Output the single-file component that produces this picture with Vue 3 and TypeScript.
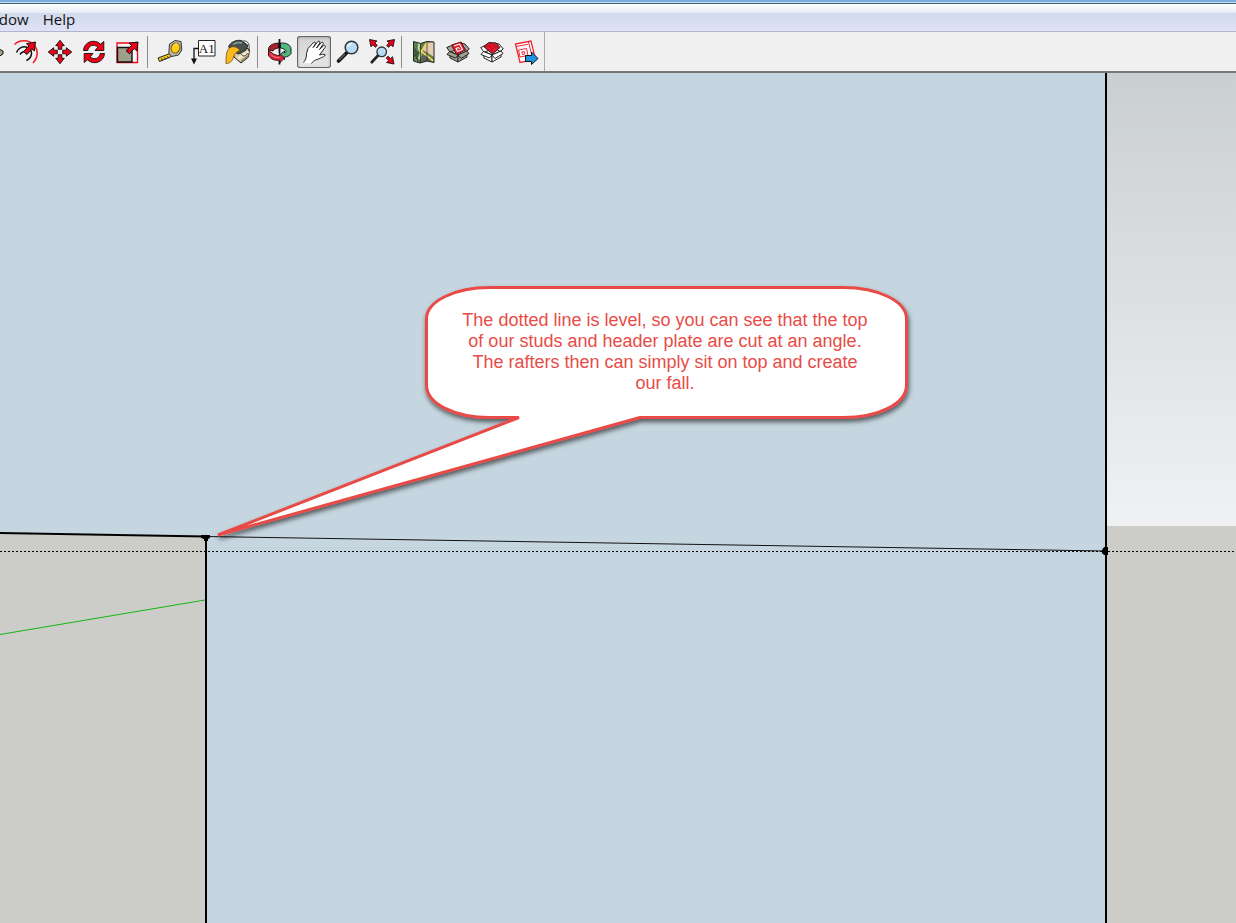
<script setup lang="ts">
import { ref } from 'vue'

type Tool = { id: string; label: string }

const groups: Tool[][] = [
  [
    { id: 'pushpull', label: 'Push/Pull' },
    { id: 'offset', label: 'Offset' },
    { id: 'move', label: 'Move' },
    { id: 'rotate', label: 'Rotate' },
    { id: 'scale', label: 'Scale' },
  ],
  [
    { id: 'tape', label: 'Tape Measure' },
    { id: 'text', label: 'Text label' },
    { id: 'paint', label: 'Paint Bucket' },
  ],
  [
    { id: 'orbit', label: 'Orbit' },
    { id: 'pan', label: 'Pan' },
    { id: 'zoom', label: 'Zoom' },
    { id: 'extents', label: 'Zoom Extents' },
  ],
  [
    { id: 'map', label: 'Add Location' },
    { id: 'getmodels', label: 'Get Models' },
    { id: 'extensions', label: 'Extension Warehouse' },
    { id: 'layout', label: 'Send to Layout' },
  ],
]

const active = ref('pan')
</script>

<template>
  <div class="app">
    <div class="frame"></div>
    <nav class="menu" aria-label="Main menu">
      <button type="button">Window</button>
      <button type="button">Help</button>
    </nav>

    <header class="toolbar">
      <div class="tools">
        <div v-for="(group, g) in groups" :key="g" class="group">
          <button
            v-for="tool in group"
            :key="tool.id"
            type="button"
            class="tool"
            :class="{ active: active === tool.id }"
            :aria-label="tool.label"
            :aria-pressed="active === tool.id"
            @click="active = tool.id"
          >
            <svg viewBox="0 0 34 32" aria-hidden="true">
              <g v-if="tool.id === 'pushpull'">
                <path d="M18 14l6-1 4 2v3l-5 3-5-2z" fill="#a6a68c" stroke="#111" />
              </g>
              <g v-else-if="tool.id === 'offset'" fill="none">
                <path d="M5.500 8.500C10 4 19 3 24.500 8.500C29.500 14 29.500 21 24 27" stroke="#ee1c2e" stroke-width="1.600" />
                <path d="M7.500 16.500C9 12 14 9.500 18.500 11.500C24 14 24 21 17.500 24.500" stroke="#111" stroke-width="1.500" />
                <path d="M11 18.500c1.500-2.500 4-3.500 6-2" stroke="#111" stroke-width="1.500" />
                <path d="M26.500 6L25.300 15L22.800 12.800L18 18.500L14.500 15.500L20 10L17.500 7.800z" fill="#f00014" stroke="#111" />
              </g>
              <g v-else-if="tool.id === 'move'" fill="#f00014" stroke="#111" stroke-width=".9">
                <path v-for="a in [0, 90, 180, 270]" :key="a" :transform="`rotate(${a} 17 16)`" d="M17 4.200L21.300 9.700H18.800V13.300H15.200V9.700H12.700z" />
              </g>
              <g v-else-if="tool.id === 'rotate'" fill="#f00014" stroke="#111" stroke-width=".9" stroke-linejoin="round">
                <path d="M6.500 14.500C7 5.500 18 2.500 23.500 8.200L26.800 5.500V14.500H18L20.800 11.200C17 7.500 11.500 9.500 10.800 14.500z" />
                <path d="M27.500 17.500C27 26.500 16 29.500 10.500 23.800L7.200 26.500V17.500H16L13.200 20.800C17 24.500 22.500 22.500 23.200 17.500z" />
              </g>
              <g v-else-if="tool.id === 'scale'">
                <path d="M6 7h20.500v19.500H6z" fill="#f8f8f8" stroke="#f00014" stroke-width="1.300" />
                <path d="M6.500 11.500h14.500v14.500H6.500z" fill="#a0a08a" stroke="#111" stroke-width="1.400" />
                <path d="M27 6L25.800 15L23.200 12.600L18.500 17.800L15 14.800L20.500 9.500L18 7.200z" fill="#f00014" stroke="#111" />
              </g>
              <g v-else-if="tool.id === 'tape'">
                <path d="M5 22l12-4.500 2.500 2.500L6.500 25.500z" fill="#f7c81c" stroke="#222" />
                <path d="M8.500 22.500l1 2M11.500 21.500l1 2M14.500 20.300l1 2" stroke="#222" />
                <path d="M16.500 8L22 4.500L28 5.500L28.800 14L25.500 19L18.500 20.500L15.800 17z" fill="#b9b9b0" stroke="#333" stroke-linejoin="round" />
                <ellipse cx="22.500" cy="12" rx="4.300" ry="5.200" fill="#ffcd14" stroke="#7a5e18" transform="rotate(20 22.500 12)" />
                <path d="M20.500 9.500c1-2 3-2 4-1" fill="none" stroke="#fff0a0" />
              </g>
              <g v-else-if="tool.id === 'text'">
                <path d="M11.500 4.500h16.500v15.500h-16.500z" fill="#fff" stroke="#222" />
                <path d="M11.500 12.500H7v12" fill="none" stroke="#111" stroke-width="1.300" />
                <path d="M4 22.500h6L7 28.500z" fill="#111" />
                <text x="19.800" y="16.500" class="label-glyph">A1</text>
              </g>
              <g v-else-if="tool.id === 'paint'" stroke-linejoin="round">
                <path d="M11 14L20 9L28.500 13.500L27.500 21L20 27L13 21z" fill="#d8cba5" stroke="#222" />
                <path d="M17 22.500L27.500 15.500" stroke="#f4ecd6" stroke-width="2.500" />
                <path d="M20 25.500L27.500 19.500" stroke="#8b8064" stroke-width="1.500" />
                <path d="M7.500 11C9 6.500 15 3.500 20.500 4.500L27 9.500L24.500 14.500L17 18z" fill="#46524f" stroke="#222" />
                <path d="M12 8.500C15 6.500 18 6 21 7" fill="none" stroke="#92a09b" stroke-width="1.500" />
                <path d="M22 5C27 4 29.500 9 27.500 15M19.500 17c2 4 5 4 7 0" fill="none" stroke="#444" />
                <path d="M5 27.500C5 21 5 15 8.500 12C12 9.500 17 11 19 14.500C15.500 15.500 13.500 18 12.500 21C11.500 25 9 27.500 5 27.500z" fill="#fcb91b" stroke="#6b4e10" stroke-width=".8" />
              </g>
              <g v-else-if="tool.id === 'orbit'" stroke-linejoin="round">
                <path d="M17.500 7C24 6.500 28 9.500 28 13V17.500C26.500 20 24 21 21.500 21V23.500L16.500 19L21.500 15V17C25 15.500 22 12.500 17.500 12z" fill="#55b878" stroke="#123" />
                <path d="M15.500 7C9 7.500 5.500 10 5.500 13.500L10 15C10.500 13.500 12 12.500 15.500 12z" fill="#a8222f" stroke="#311" />
                <path d="M5.500 13.500V19.500C8 23.500 12 24.700 16.500 24.200V27L21.500 22L16.500 17.500V19.500C12 19.500 8.500 17.500 5.500 13.500z" fill="#e02436" stroke="#311" />
                <path d="M7.500 18c2.500 3 6 3.700 9 3.500" fill="none" stroke="#f48a92" />
                <path d="M16.500 3v14.500M16.500 25v3.500" stroke="#111" stroke-width="1.800" />
              </g>
              <g v-else-if="tool.id === 'pan'">
                <path d="M6.500 26.500C9 23.500 9.500 21 9.500 17.500L11 12.500L16.500 6.500C17.500 5.500 19 6.500 18.300 8L16 11.500L21 5.500C22.200 4.500 23.500 5.700 22.800 7L19.500 12L24.500 6.500C25.700 5.700 27 7 26 8.300L22.500 13.500L26.800 9.500C28 9 29 10.200 28 11.500L22.500 19C25 18.500 26.500 18 28 18.500C28.500 20 26 21 23.500 22C20 24 17 23.500 14.500 27.500" fill="#fff" stroke="#222" stroke-linejoin="round" />
              </g>
              <g v-else-if="tool.id === 'zoom'">
                <path d="M15.500 17L7.500 25" stroke="#111" stroke-width="3.600" stroke-linecap="round" />
                <path d="M14 18L8 24" stroke="#666" stroke-width="1.200" />
                <circle cx="20.500" cy="11.500" r="6.300" fill="#b7dcf8" stroke="#333" stroke-width="1.500" />
                <path d="M17 11c.3-2 1.800-3.300 4-3.300" stroke="#edf8ff" stroke-width="1.500" fill="none" />
              </g>
              <g v-else-if="tool.id === 'extents'">
                <path d="M13.500 19L6 27" stroke="#222" stroke-width="2.600" />
                <circle cx="16.700" cy="15.800" r="4.800" fill="#b7dcf8" stroke="#333" stroke-width="1.300" />
                <g fill="#f00014" stroke="#111" stroke-width=".9">
                  <path d="M4.500 3.500L12 5L9.800 6.800L12.300 9.500L10.300 11.300L8 8.800L6 10.800z" />
                  <path d="M29.500 3.500L22 5L24.200 6.800L21.700 9.500L23.700 11.300L26 8.800L28 10.800z" />
                  <path d="M29 28L21.500 26.500L23.700 24.700L21.200 22L23.200 20.200L25.500 22.700L27.500 20.700z" />
                </g>
              </g>
              <g v-else-if="tool.id === 'map'">
                <path d="M6.500 5.500L13.500 7.500L20 5.500L27 6V26.500L20 25L13 27L6.500 25z" fill="#5d7d49" />
                <path d="M19 7L27 6V21L16 14z" fill="#e3ceb0" />
                <path d="M11 6C14 9 10 11 12.500 14S14 20 9 26" fill="none" stroke="#c1d7a4" stroke-width="2" />
                <path d="M8 13L11 26M7 20l5-4" stroke="#3c5233" stroke-width="2" />
                <path d="M20 6L14.500 15.500L26.500 25" fill="none" stroke="#f2d456" stroke-width="1.800" />
                <path d="M14.500 20l3-1 6 5-4 1-5 1z" fill="#56625b" />
                <path d="M6.500 5.500L13.500 7.500L20 5.500L27 6V26.500L20 25L13 27L6.500 25z" fill="none" stroke="#222" />
                <path d="M13.500 7.500V27M20 5.500V25" stroke="#222" stroke-width=".7" />
              </g>
              <g v-else-if="tool.id === 'getmodels' || tool.id === 'extensions'" stroke-linejoin="round">
                <g :fill="tool.id === 'getmodels' ? '#a3a394' : '#fff'" stroke="#222">
                  <path d="M8.500 15L17 19V26L9 22z" />
                  <path d="M17 19L26 15V21L17 26z" />
                  <path d="M12 9L5.700 11.500L9 16L15 14z" />
                  <path d="M20 7L24 8L28.300 13L25 15.500L20 12z" />
                  <path d="M8.500 15.500L17 19L14.500 22L6 18.500z" />
                  <path d="M17 19L26 15L28 17.500L20 22.500z" />
                </g>
                <g v-if="tool.id === 'getmodels'">
                  <path d="M10.500 9L20 6L24.500 14L15.500 18.500z" fill="#e01c2b" stroke="#611" />
                  <path d="M13 10l5.500-2 3 5.500-5 2-1.500-3 2.500-1 1 1.500" fill="none" stroke="#fff" stroke-width="1.100" />
                </g>
                <g v-else>
                  <path d="M8.500 10.500L14 6.500L21 7L25 11.500L17.500 18z" fill="#e5172a" stroke="#222" />
                  <path d="M9 10.500L14 10L17 12.500L21 10.500L25 11.500M14 10L17 7.500L21 10.500M17 12.500V17" fill="none" stroke="#9c1020" stroke-width=".7" />
                </g>
              </g>
              <g v-else>
                <path d="M6.500 8L22 5L26.500 23.500L11 26.500z" fill="#fff" stroke="#ee2636" stroke-width="1.300" />
                <path d="M7.500 10.500L19 8.300M19.500 6l4 16M9.500 14l8-1.500 1.500 7-8 1.500zM12.800 16l2.400-.5.7 2.500-2.400.5z" fill="none" stroke="#ee2636" />
                <path d="M16.500 19.500H22.500V16L29 22.500L22.500 28.500V25.500H16.500z" fill="#1d93e4" stroke="#111" />
              </g>
            </svg>
          </button>
        </div>
      </div>
    </header>

    <main class="viewport">
      <svg class="scene" viewBox="0 73 1236 850" preserveAspectRatio="xMinYMin slice" role="img" aria-label="Wall framing model">
        <defs>
          <linearGradient id="sky" x1="0" y1="0" x2="0" y2="1">
            <stop offset="0" stop-color="#cacfd2" />
            <stop offset="1" stop-color="#f0f1f3" />
          </linearGradient>
          <filter id="shadow" x="-5%" y="-5%" width="110%" height="115%">
            <feDropShadow dx="1" dy="3" stdDeviation="2.500" flood-color="#000" flood-opacity=".6" />
          </filter>
        </defs>
        <rect y="73" width="1236" height="850" fill="#c6d6e0" />
        <rect x="1106" y="73" width="130" height="453" fill="url(#sky)" />
        <rect x="1106" y="526" width="130" height="397" fill="#cccdc8" />
        <path d="M0 533L206 537V923H0z" fill="#cccdc8" />
        <path d="M0 634.500L205 600" stroke="#16b416" />
        <path d="M0 551.500H1236" stroke="#000" stroke-dasharray="2 2" />
        <path d="M206 536.500L1106 551" stroke="#111" />
        <path d="M0 533L206 536.500" stroke="#000" stroke-width="2" />
        <path d="M206 537V923M1106 73V923" stroke="#000" stroke-width="2" />
        <path d="M201 535h9v3l-2 1v2h-4v-2l-3-1zM1102 550l2-3h4v8h-4l-2-2z" fill="#000" />
        <path
          d="M490 287.500H843C878 287.500 906.500 301 906.500 319V385C906.500 404 878 417.500 843 417.500H640L218 535L519 417.500H490C455 417.500 426.500 404 426.500 385V319C426.500 301 455 287.500 490 287.500z"
          fill="#fff" stroke="#e84c47" stroke-width="3" stroke-linejoin="bevel" filter="url(#shadow)"
        />
      </svg>
      <p class="note">
        The dotted line is level, so you can see that the top<br />
        of our studs and header plate are cut at an angle.<br />
        The rafters then can simply sit on top and create<br />
        our fall.
      </p>
    </main>
  </div>
</template>

<style>
body {
  margin: 0;
}
</style>

<style scoped>
.app {
  display: flex;
  flex-direction: column;
  height: 100vh;
  overflow: hidden;
  background: #f0f0f0;
}
.frame {
  flex: none;
  height: 2px;
  background: #7aaddb;
  border-bottom: 1px solid #c3def5;
}
.menu {
  flex: none;
  display: flex;
  justify-content: flex-start;
  gap: 14px;
  box-sizing: border-box;
  height: 29px;
  padding-top: 2px;
  border-top: 1px solid #46607a;
  border-bottom: 1px solid #b0b6cf;
  background: linear-gradient(#fff 0, #e6ebf4 9px, #d2d9eb 9px, #dee4f6 100%);
  overflow: hidden;
}
.menu button {
  padding: 0;
  border: 0;
  background: none;
  color: #111;
  font: 15px/26px "Open Sans", "Noto Sans", sans-serif;
}
.menu button:first-child {
  margin-left: -28px;
}
.toolbar {
  flex: none;
  display: flex;
  height: 39px;
  border-bottom: 2px solid #777;
  overflow: hidden;
}
.tools {
  display: flex;
  align-items: center;
  margin-left: -25px;
  padding-right: 1px;
  border-right: 1px solid #aaa;
}
.group {
  display: flex;
}
.group + .group::before {
  content: "";
  width: 1px;
  margin: 0 5px 0 2px;
  background: #8a8a8a;
}
.tool {
  box-sizing: border-box;
  width: 34px;
  height: 32px;
  padding: 0;
  border: 0;
  border-radius: 3px;
  background: none;
}
.tool svg {
  display: block;
  width: 34px;
  height: 32px;
  fill: none;
}
.tool.active {
  background: linear-gradient(#d4d4d4, #e6e6e6);
  box-shadow: inset 0 0 0 1px #666, inset 0 1px 3px 1px #aaa;
}
.label-glyph {
  fill: #111;
  font: 13px "Liberation Serif", serif;
  text-anchor: middle;
}
.viewport {
  position: relative;
  flex: 1;
  min-height: 0;
}
.scene {
  display: block;
  width: 100%;
  height: 100%;
}
.note {
  position: absolute;
  top: 237px;
  left: 427px;
  width: 476px;
  margin: 0;
  color: #e84c47;
  font: 18px/21px "Liberation Sans", Arial, sans-serif;
  text-align: center;
}
</style>
